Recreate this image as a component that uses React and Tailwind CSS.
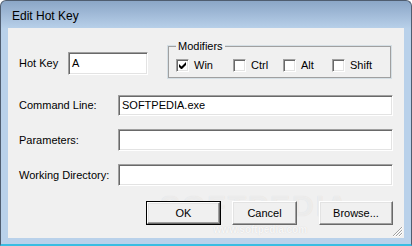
import React from 'react';

const font = { fontFamily: '"Liberation Sans", Arial, sans-serif' };

const sunken =
  'bg-white border border-t-[#a0a0a0] border-l-[#a0a0a0] border-b-white border-r-white shadow-[inset_1px_1px_0_#696969,inset_-1px_-1px_0_#e3e3e3]';

const raised =
  'bg-[#f0f0f0] border border-t-white border-l-white border-b-[#696969] border-r-[#696969] shadow-[inset_-1px_-1px_0_#a0a0a0,inset_1px_1px_0_#e3e3e3]';

const Field = ({ className = '', value = '' }) => (
  <div className={`${sunken} flex items-center pl-[3px] text-[11px] text-black ${className}`}>{value}</div>
);

const Check = ({ label, checked, width }) => (
  <div className="flex items-center" style={{ width }}>
    <div className={`${sunken} w-[13px] h-[13px] flex items-center justify-center`}>
      {checked && (
        <svg width="7" height="7" viewBox="0 0 7 7">
          <path d="M0 2v3l2 2h1l4-4V0L2.5 4.5z" fill="#000" />
        </svg>
      )}
    </div>
    <span className="ml-[5px] text-[11px] text-black">{label}</span>
  </div>
);

const Button = ({ children, className = '', isDefault }) => (
  <div className={`${isDefault ? 'border border-black' : ''} ${className} h-[24px] flex`}>
    <div className={`${raised} flex-1 flex items-center justify-center text-[11px] text-black`}>{children}</div>
  </div>
);

const App = () => {
  return (
    <div
      className="w-[412px] h-[246px] flex flex-col rounded-t-[6px] border border-[#4f5d70] border-b-2 border-b-[#39bde2] bg-[linear-gradient(to_bottom,#8ba6c7_0px,#b9d1ea_28px,#b9d1ea_100%)] overflow-hidden"
      style={font}
    >
      <div className="h-[27px] flex items-center pl-[11px] pt-[2px]">
        <span className="text-[12px] text-black">Edit Hot Key</span>
      </div>

      <div className="flex-1 mx-[7px] mb-[6px] bg-[#f0f0f0] relative">
        <div className="pointer-events-none absolute left-[152px] top-[162px] flex flex-col items-center">
          <span className="text-[30px] leading-[32px] font-bold tracking-[2px] text-white/50 [text-shadow:0_0_1px_rgba(0,0,0,0.1)]">
            SOFTPEDIA<span className="text-[9px] align-top">™</span>
          </span>
          <span className="mt-[3px] text-[10px] leading-[10px] font-bold text-white/80 [text-shadow:0_0_1px_rgba(0,0,0,0.15)]">
            www.softpedia.com
          </span>
        </div>

        <div className="flex pl-[11px] pt-[17px]">
          <div className="flex items-center mt-[7px] h-[23px]">
            <span className="w-[49px] text-[11px] text-black">Hot Key</span>
            <Field className="w-[80px] h-[23px]" value="A" />
          </div>
          <div className="relative ml-[19px] w-[225px] h-[34px] border border-[#d5dfe5] shadow-[inset_0_0_0_1px_#a0a0a0] pt-[11px] pl-[8px]">
            <span className="absolute -top-[8px] left-[8px] bg-[#f0f0f0] px-[2px] text-[11px] text-black">Modifiers</span>
            <div className="flex">
              <Check label="Win" checked width={57} />
              <Check label="Ctrl" width={50} />
              <Check label="Alt" width={49} />
              <Check label="Shift" width={50} />
            </div>
          </div>
        </div>

        <div className="flex flex-col pl-[11px] mt-[16px] gap-[13px]">
          <div className="flex items-center">
            <span className="w-[99px] text-[11px] text-black">Command Line:</span>
            <Field className="w-[275px] h-[21px]" value="SOFTPEDIA.exe" />
          </div>
          <div className="flex items-center">
            <span className="w-[99px] text-[11px] text-black">Parameters:</span>
            <Field className="w-[275px] h-[22px]" />
          </div>
          <div className="flex items-center">
            <span className="w-[99px] text-[11px] text-black">Working Directory:</span>
            <Field className="w-[275px] h-[22px]" />
          </div>
        </div>

        <div className="relative flex pl-[138px] mt-[15px]">
          <Button isDefault className="w-[75px]">OK</Button>
          <Button className="w-[65px] ml-[11px]">Cancel</Button>
          <Button className="w-[74px] ml-[22px]">Browse...</Button>
        </div>

        <svg className="absolute right-[1px] bottom-[1px]" width="11" height="11" viewBox="0 0 11 11">
          <path d="M10 1L1 10M10 4L4 10M10 7L7 10" stroke="#a0a0a0" strokeWidth="1" />
          <path d="M11 1L1 11M11 4L4 11M11 7L7 11" stroke="#ffffff" strokeWidth="1" />
        </svg>
      </div>
    </div>
  );
};

export default App;
